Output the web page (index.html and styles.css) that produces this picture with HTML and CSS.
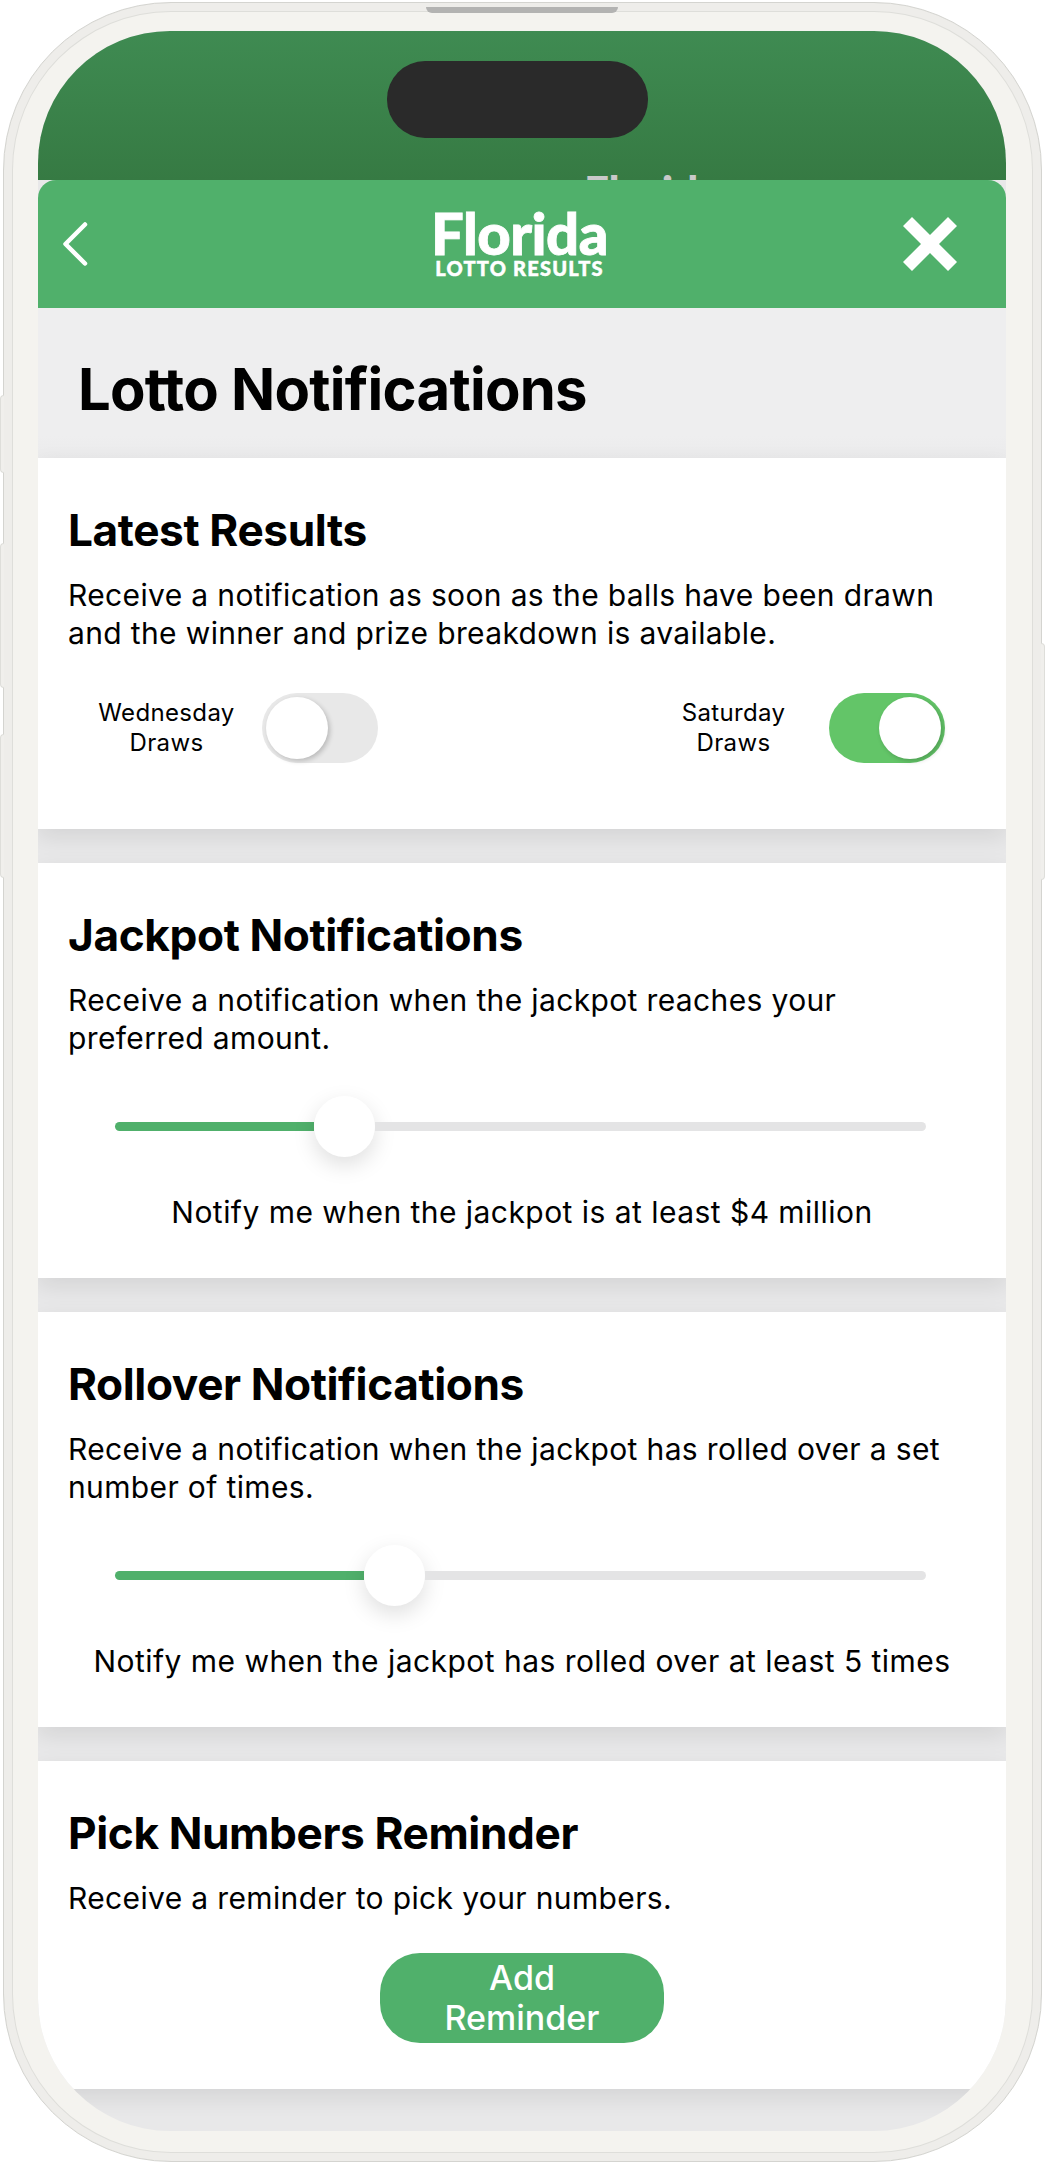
FILE: index.html
```html
<!DOCTYPE html>
<html>
<head>
  <meta charset="utf-8">
  <title>Lotto Notifications</title>
  <link rel="stylesheet" href="styles.css">
</head>
<body>
    <div class="phone">
        <div class="side-btn side-mute"></div>
        <div class="side-btn side-up"></div>
        <div class="side-btn side-down"></div>
        <div class="side-btn side-power"></div>
        <div class="speaker"></div>
        <div class="screen">
            <div class="status">
                <div class="island"></div>
                <div class="ghost">Florida</div>
            </div>
            <div class="header">
                <svg class="back" width="26" height="44" viewBox="0 0 26 44"><path d="M23 2.500 L3.500 22 L23 41.500" fill="none" stroke="#fff" stroke-width="4.500" stroke-linecap="round" stroke-linejoin="round"/></svg>
                <div class="logo">
                    <div class="logo-top">Florida</div>
                    <div class="logo-bottom">LOTTO RESULTS</div>
                </div>
                <svg class="close" width="54" height="54" viewBox="0 0 54 54"><path d="M0 9 L9 0 L27 18 L45 0 L54 9 L36 27 L54 45 L45 54 L27 36 L9 54 L0 45 L18 27 Z" fill="#fff"/></svg>
            </div>
            <div class="title-band">
                <h1>Lotto Notifications</h1>
            </div>

            <div class="card card-results">
                <h2>Latest Results</h2>
                <p>Receive a notification as soon as the balls have been drawn and the winner and prize breakdown is available.</p>
                <div class="toggles">
                    <div class="toggle-item">
                        <span class="toggle-label">Wednesday<br>Draws</span>
                        <div class="toggle"><div class="knob"></div></div>
                    </div>
                    <div class="toggle-item">
                        <span class="toggle-label">Saturday<br>Draws</span>
                        <div class="toggle on"><div class="knob"></div></div>
                    </div>
                </div>
            </div>

            <div class="card">
                <h2>Jackpot Notifications</h2>
                <p>Receive a notification when the jackpot reaches your preferred amount.</p>
                <div class="slider">
                    <div class="fill" style="width: 199px"></div>
                    <div class="thumb"></div>
                    <div class="rest"></div>
                </div>
                <div class="slider-text">Notify me when the jackpot is at least $4 million</div>
            </div>

            <div class="card">
                <h2>Rollover Notifications</h2>
                <p>Receive a notification when the jackpot has rolled over a set number of times.</p>
                <div class="slider">
                    <div class="fill" style="width: 249px"></div>
                    <div class="thumb"></div>
                    <div class="rest"></div>
                </div>
                <div class="slider-text">Notify me when the jackpot has rolled over at least 5 times</div>
            </div>

            <div class="card card-reminder">
                <h2>Pick Numbers Reminder</h2>
                <p>Receive a reminder to pick your numbers.</p>
                <button class="add-btn">Add<br>Reminder</button>
            </div>
        </div>
    </div>
</body>
</html>
```

FILE: styles.css
```css
* {
    box-sizing: border-box;
}
body {
    margin: 0;
    background-color: #fff;
    color: #000;
    font-family: Inter, "Liberation Sans", sans-serif;
}

.phone {
    position: relative;
    width: 1039px;
    height: 2160px;
    margin: 2px 0 0 3px;
    padding: 28px 35px 30px 34px;
    background-color: #f4f3ef;
    border: 1px solid #d4d4d0;
    border-radius: 168px;
    box-shadow: inset 0 0 0 8px #eeedea, inset 0 0 0 9px #dededa;
}
.side-btn {
    position: absolute;
    width: 4px;
    background-color: #f0efec;
    border: 1px solid #dededa;
}
.side-mute {
    left: -4px;
    top: 392px;
    height: 78px;
    border-right: 0;
    border-radius: 4px 0 0 4px;
}
.side-up {
    left: -4px;
    top: 540px;
    height: 145px;
    border-right: 0;
    border-radius: 4px 0 0 4px;
}
.side-down {
    left: -4px;
    top: 731px;
    height: 144px;
    border-right: 0;
    border-radius: 4px 0 0 4px;
}
.side-power {
    right: -4px;
    top: 640px;
    height: 237px;
    border-left: 0;
    border-radius: 0 4px 4px 0;
}
.speaker {
    position: absolute;
    left: 422px;
    top: 4px;
    width: 192px;
    height: 6px;
    background-color: #b3b3b2;
    border-radius: 0 0 6px 6px;
}
.screen {
    height: 100%;
    overflow: hidden;
    background-color: #e8e8e9;
    border-radius: 132px;
}

.status {
    position: relative;
    height: 149px;
    background: linear-gradient(#3f8b52, #367a43);
}
.island {
    position: absolute;
    left: 349px;
    top: 30px;
    width: 261px;
    height: 77px;
    background-color: #2a2a2a;
    border-radius: 38px;
}
.ghost {
    position: absolute;
    left: 546px;
    top: 135px;
    font-family: Lato, sans-serif;
    font-weight: 900;
    font-size: 44px;
    line-height: 50px;
    color: #c9c9c9;
}

.header {
    position: relative;
    height: 128px;
    display: grid;
    grid-template-columns: 1fr auto 1fr;
    align-items: center;
    padding: 0 49px 0 24px;
    background-color: #50b06b;
    border-radius: 18px 18px 0 0;
}
.close {
    justify-self: end;
}
.logo {
    color: #fff;
    font-family: Lato, sans-serif;
    font-weight: 900;
    text-align: center;
    margin-left: 20px;
}
.logo-top {
    font-size: 58px;
    line-height: 47px;
    letter-spacing: -0.5px;
    -webkit-text-stroke: 0.8px #fff;
}
.logo-bottom {
    font-size: 20px;
    line-height: 24px;
    letter-spacing: 1.2px;
    -webkit-text-stroke: 0.5px #fff;
}

.title-band {
    height: 150px;
    padding: 11px 0 0 40px;
    display: flex;
    align-items: center;
    background: linear-gradient(#eeeeef 85%, #ebebec);
}
h1 {
    margin: 0;
    font-size: 58px;
    font-weight: 700;
    letter-spacing: -0.75px;
}

.card {
    height: 415px;
    margin-bottom: 34px;
    padding: 48px 30px 0;
    background-color: #fff;
    box-shadow: 0 8px 22px rgba(0, 0, 0, 0.09);
}
.card-results {
    height: 371px;
}
.card-reminder {
    height: 328px;
    margin-bottom: 0;
}
h2 {
    margin: 0 0 22px;
    font-size: 44.200px;
    line-height: 48px;
    font-weight: 700;
    letter-spacing: -0.4px;
}
p {
    max-width: 890px;
    margin: 0;
    font-size: 30px;
    line-height: 38px;
    letter-spacing: 0.36px;
}

.toggles {
    display: flex;
    justify-content: space-between;
    margin-top: 41px;
    padding: 0 31px 0 30px;
}
.toggle-item {
    display: flex;
    align-items: center;
    gap: 27px;
}
.toggle-label {
    width: 137px;
    font-size: 24px;
    line-height: 30px;
    letter-spacing: 0.35px;
    text-align: center;
}
.toggle {
    width: 116px;
    height: 70px;
    padding: 4px;
    background-color: #e8e8e8;
    border-radius: 35px;
}
.toggle.on {
    display: flex;
    justify-content: flex-end;
    background-color: #63c568;
}
.knob {
    width: 62px;
    height: 62px;
    background-color: #fff;
    border-radius: 50%;
    box-shadow: 2px 2px 5px rgba(0, 0, 0, 0.2);
}

.slider {
    display: flex;
    align-items: center;
    height: 62px;
    margin: 38px 50px 0 47px;
}
.fill {
    height: 9px;
    background-color: #50b06b;
    border-radius: 5px 0 0 5px;
}
.rest {
    flex: 1;
    height: 9px;
    background-color: #e4e4e5;
    border-radius: 0 5px 5px 0;
}
.thumb {
    flex: none;
    width: 61px;
    height: 61px;
    background-color: #fff;
    border-radius: 50%;
    box-shadow: 0 8px 22px rgba(0, 0, 0, 0.13);
}
.slider-text {
    margin-top: 36px;
    font-size: 30px;
    line-height: 38px;
    letter-spacing: 0.46px;
    text-align: center;
}

.add-btn {
    display: block;
    width: 284px;
    height: 90px;
    margin: 36px auto 0;
    padding: 0;
    border: 0;
    color: #fff;
    background-color: #50b06b;
    border-radius: 40px;
    font-family: Inter, "Liberation Sans", sans-serif;
    font-size: 34px;
    font-weight: 500;
    line-height: 40px;
}
```
